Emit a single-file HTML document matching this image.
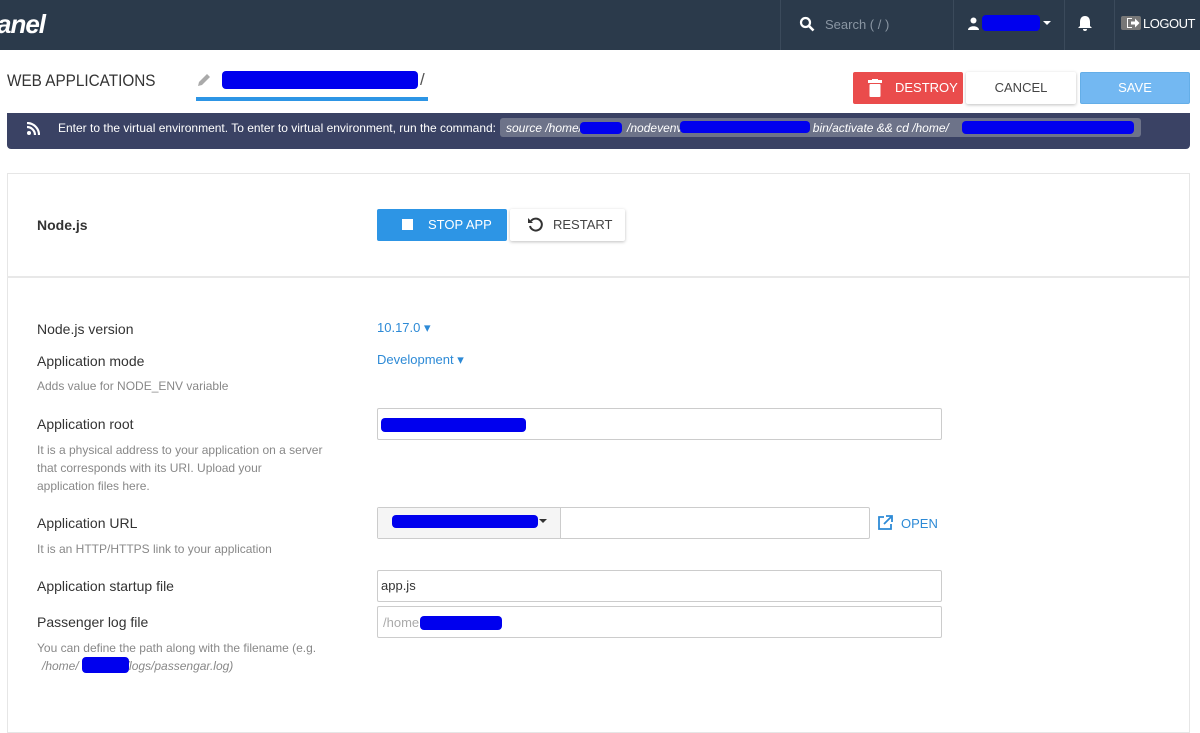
<!DOCTYPE html>
<html><head><meta charset="utf-8"><style>
*{box-sizing:border-box;margin:0;padding:0}
body{width:1200px;height:684px;overflow:hidden;background:#fff;font-family:"Liberation Sans",sans-serif;position:relative;color:#333}
.a{position:absolute}
.top{left:0;top:0;width:1200px;height:50px;background:#2b3a4b}
.sep{top:0;width:1px;height:50px;background:#3b4a5b}
.blue{background:#0000ee;border-radius:4px}
.lbl{font-size:14px;color:#333;left:37px}
.hint{font-size:12px;color:#888;left:37px;line-height:18px}
.inp{left:377px;width:565px;height:32px;border:1px solid #ccc;border-radius:2px;background:#fff}
</style></head><body>
<div class="a top"></div>
<div class="a" style="left:-3px;top:9px;color:#fff;font-size:26px;font-weight:bold;font-style:italic;letter-spacing:-1px">anel</div>
<div class="a sep" style="left:780px"></div>
<div class="a sep" style="left:953px"></div>
<div class="a sep" style="left:1064px"></div>
<div class="a sep" style="left:1114px"></div>
<svg class="a" style="left:799px;top:16px" width="16" height="16" viewBox="0 0 16 16"><circle cx="6.5" cy="6.5" r="4.5" stroke="#fff" stroke-width="2.2" fill="none"/><path d="M10 10l4.5 4.5" stroke="#fff" stroke-width="2.6"/></svg>
<div class="a" style="left:825px;top:17px;font-size:13px;color:#8a96a3">Search ( / )</div>
<svg class="a" style="left:967px;top:17px" width="13" height="13" viewBox="0 0 13 13"><circle cx="6.5" cy="3.5" r="3" fill="#fff"/><path d="M1 13c0-5 11-5 11 0z" fill="#fff"/></svg>
<div class="a blue" style="left:982px;top:15px;width:58px;height:16px"></div>
<div class="a" style="left:1043px;top:21px;border:4px solid transparent;border-top-color:#fff"></div>
<svg class="a" style="left:1077px;top:15px" width="16" height="17" viewBox="0 0 16 17"><path d="M8 1c3 0 5 2 5 6v4l2 2H1l2-2V7c0-4 2-6 5-6z M6 14h4a2 2 0 0 1-4 0z" fill="#fff"/></svg>
<div class="a" style="left:1121px;top:16px;width:20px;height:14px;background:#777;border-radius:2px"></div>
<svg class="a" style="left:1126px;top:17px" width="14" height="12" viewBox="0 0 14 12"><path d="M2 2h4v-1h-5v10h5v-1h-4z" fill="#fff"/><path d="M5 4.5h4v-3l4.5 4.5-4.5 4.5v-3h-4z" fill="#fff"/></svg>
<div class="a" style="left:1143px;top:16px;color:#fff;font-size:13px;letter-spacing:-0.5px">LOGOUT</div>

<div class="a" style="left:7px;top:71px;font-size:17px;color:#333;transform:scaleX(.9);transform-origin:left">WEB APPLICATIONS</div>
<svg class="a" style="left:196px;top:72px" width="16" height="16" viewBox="0 0 16 16"><path d="M2 14l1-4 8-8 3 3-8 8z" fill="#aaa"/></svg>
<div class="a blue" style="left:222px;top:71px;width:196px;height:18px"></div>
<div class="a" style="left:420px;top:70px;font-size:17px;color:#555">/</div>
<div class="a" style="left:196px;top:97px;width:232px;height:4px;background:#2d95e5"></div>

<div class="a" style="left:853px;top:72px;width:110px;height:32px;background:#ea4c4c;border-radius:2px;color:#fff;font-size:13px;line-height:32px;padding-left:42px">DESTROY</div>
<svg class="a" style="left:867px;top:79px" width="16" height="18" viewBox="0 0 16 18"><rect x="1" y="1" width="14" height="3" fill="#fff"/><rect x="5" y="0" width="6" height="2" fill="#fff"/><rect x="2.5" y="5" width="11" height="13" rx="1" fill="#fff"/></svg>
<div class="a" style="left:966px;top:72px;width:110px;height:32px;background:#fff;box-shadow:0 1px 3px rgba(0,0,0,.25);border-radius:2px;color:#444;font-size:13px;line-height:32px;text-align:center">CANCEL</div>
<div class="a" style="left:1080px;top:72px;width:110px;height:32px;background:#73b8f2;border:1px solid #64aee8;border-radius:2px;color:#fff;font-size:13px;line-height:30px;text-align:center">SAVE</div>

<div class="a" style="left:7px;top:113px;width:1183px;height:36px;background:#3a4264;border-radius:0 0 4px 4px"></div>
<svg class="a" style="left:27px;top:122px" width="13" height="13" viewBox="0 0 13 13"><circle cx="2" cy="11" r="2" fill="#fff"/><path d="M0 5a8 8 0 0 1 8 8M0 1a12 12 0 0 1 12 12" stroke="#fff" stroke-width="2.2" fill="none"/></svg>
<div class="a" style="left:58px;top:121px;color:#fff;font-size:12px">Enter to the virtual environment. To enter to virtual environment, run the command:</div>
<div class="a" style="left:500px;top:118px;width:641px;height:19px;background:#6d7389;border-radius:3px"></div>
<div class="a" style="left:506px;top:121px;color:#fff;font-size:12px;font-style:italic;white-space:nowrap">source /home/<span style="display:inline-block;width:45px"></span>/nodevenv/<span style="display:inline-block;width:127px"></span>bin/activate &amp;&amp; cd /home/</div>
<div class="a blue" style="left:580px;top:122px;width:42px;height:12px"></div>
<div class="a blue" style="left:680px;top:121px;width:130px;height:12px"></div>
<div class="a blue" style="left:962px;top:121px;width:172px;height:13px"></div>

<div class="a" style="left:7px;top:173px;width:1183px;height:560px;border:1px solid #e6e6e6"></div>
<div class="a" style="left:7px;top:276px;width:1183px;height:2px;background:#e8e8e8"></div>
<div class="a" style="left:37px;top:217px;font-size:14px;font-weight:bold;color:#333">Node.js</div>
<div class="a" style="left:377px;top:209px;width:130px;height:32px;background:#2d95e5;border-radius:2px;color:#fff;font-size:13px;line-height:32px;padding-left:51px">STOP APP</div>
<div class="a" style="left:402px;top:219px;width:11px;height:11px;background:#fff"></div>
<div class="a" style="left:510px;top:209px;width:115px;height:32px;background:#fff;box-shadow:0 1px 3px rgba(0,0,0,.25);border-radius:2px;color:#444;font-size:13px;line-height:32px;padding-left:43px">RESTART</div>
<svg class="a" style="left:527px;top:216px" width="17" height="17" viewBox="0 0 17 17"><path d="M4 5A6 6 0 1 1 3 10" stroke="#333" stroke-width="2" fill="none"/><path d="M1 2v5h5z" fill="#333"/></svg>

<div class="a lbl" style="top:321px">Node.js version</div>
<div class="a" style="left:377px;top:320px;font-size:13px;color:#2d8ad6">10.17.0 ▾</div>
<div class="a lbl" style="top:353px">Application mode</div>
<div class="a" style="left:377px;top:352px;font-size:13px;color:#2d8ad6">Development ▾</div>
<div class="a hint" style="top:377px">Adds value for NODE_ENV variable</div>

<div class="a lbl" style="top:416px">Application root</div>
<div class="a inp" style="top:408px"></div>
<div class="a blue" style="left:381px;top:418px;width:145px;height:14px"></div>
<div class="a hint" style="top:441px">It is a physical address to your application on a server<br>that corresponds with its URI. Upload your<br>application files here.</div>

<div class="a lbl" style="top:515px">Application URL</div>
<div class="a" style="left:377px;top:507px;width:493px;height:32px;border:1px solid #ccc;border-radius:2px"></div>
<div class="a" style="left:378px;top:508px;width:183px;height:30px;background:#f5f5f5;border-right:1px solid #ccc"></div>
<div class="a blue" style="left:392px;top:515px;width:146px;height:13px"></div>
<div class="a" style="left:539px;top:519px;border:4px solid transparent;border-top-color:#333"></div>
<svg class="a" style="left:877px;top:515px" width="16" height="16" viewBox="0 0 16 16"><path d="M7 2H2v12h12V9" stroke="#2d8ad6" stroke-width="1.8" fill="none"/><path d="M9 1h6v6M15 1L7 9" stroke="#2d8ad6" stroke-width="1.8" fill="none"/></svg>
<div class="a" style="left:901px;top:516px;font-size:13px;color:#2d8ad6">OPEN</div>
<div class="a hint" style="top:540px">It is an HTTP/HTTPS link to your application</div>

<div class="a lbl" style="top:578px">Application startup file</div>
<div class="a inp" style="top:570px"></div>
<div class="a" style="left:381px;top:578px;font-size:13px;color:#333">app.js</div>
<div class="a lbl" style="top:614px">Passenger log file</div>
<div class="a inp" style="top:606px"></div>
<div class="a" style="left:383px;top:615px;font-size:13px;color:#aaa">/home</div>
<div class="a blue" style="left:420px;top:616px;width:82px;height:14px"></div>
<div class="a hint" style="top:639px">You can define the path along with the filename (e.g.</div>
<div class="a hint" style="top:657px;left:42px;font-style:italic">/home/<span style="display:inline-block;width:47px"></span>/logs/passengar.log)</div>
<div class="a blue" style="left:82px;top:657px;width:47px;height:16px"></div>
</body></html>
